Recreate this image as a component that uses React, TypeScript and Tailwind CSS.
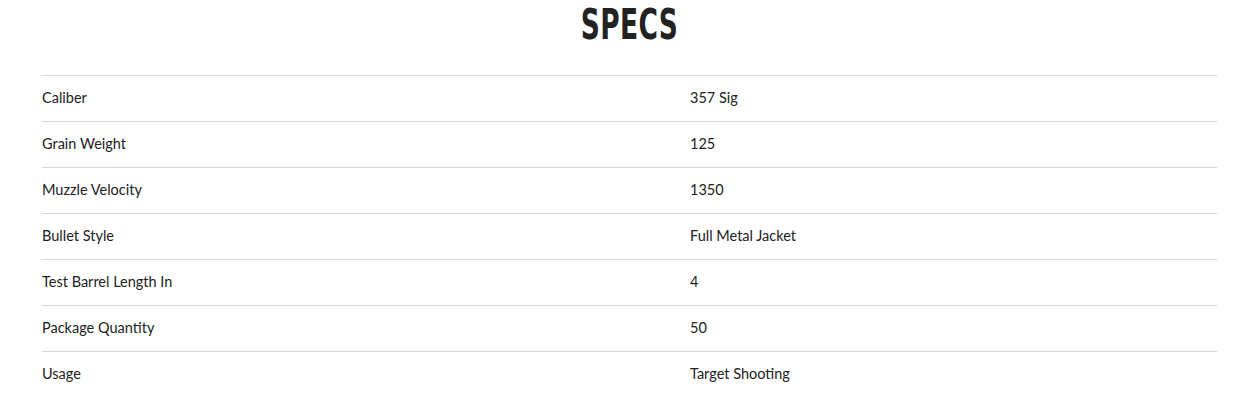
import React from "react";

const specs = [
  { label: "Caliber", value: "357 Sig" },
  { label: "Grain Weight", value: "125" },
  { label: "Muzzle Velocity", value: "1350" },
  { label: "Bullet Style", value: "Full Metal Jacket" },
  { label: "Test Barrel Length In", value: "4" },
  { label: "Package Quantity", value: "50" },
  { label: "Usage", value: "Target Shooting" },
];

export default function App() {
  return (
    <div className="w-[1239px] h-[409px] bg-white overflow-hidden">
      <div className="ml-[42px] w-[1175px]">
        <div className="flex justify-center h-[75px]">
          <h2
            className="text-[42px] leading-[50px] font-bold text-[#222] scale-x-[0.7] tracking-[0.5px]"
            style={{ fontFamily: '"Liberation Sans Narrow", "DejaVu Sans Condensed", sans-serif' }}
          >
            SPECS
          </h2>
        </div>
        <div className="border-t border-[#d6d6d6]" style={{ fontFamily: 'Lato, "Open Sans", sans-serif' }}>
          {specs.map((s, i) => (
            <div
              key={s.label}
              className={`flex items-center h-[46px] pb-[2px] text-[14.5px] text-[#222] ${i < specs.length - 1 ? "border-b border-[#d6d6d6]" : ""}`}
            >
              <div className="w-[648px]">{s.label}</div>
              <div className="flex-1">{s.value}</div>
            </div>
          ))}
        </div>
      </div>
    </div>
  );
}
